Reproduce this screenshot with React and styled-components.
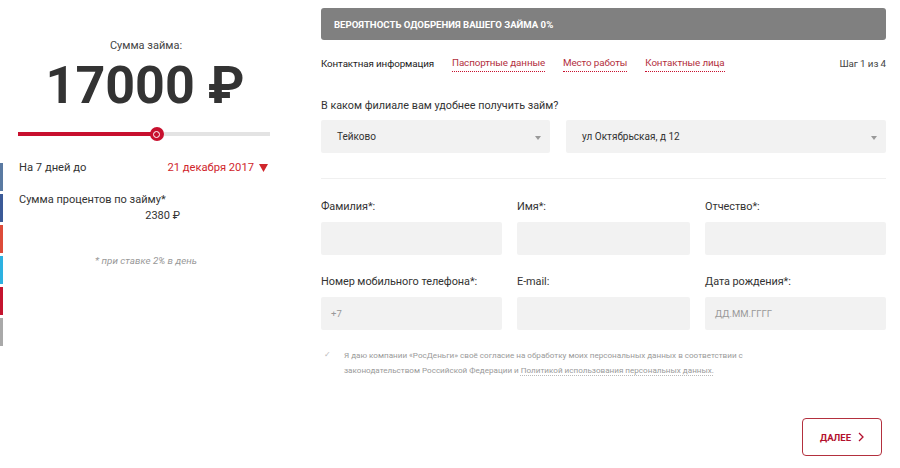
import React from "react";
import styled, { createGlobalStyle } from "styled-components";

const GlobalStyle = createGlobalStyle`
  body {
    margin: 0;
    background: #fff;
    font-family: Roboto, "Liberation Sans", sans-serif;
    color: #333;
  }
`;

const Page = styled.div`
  position: relative;
  display: flex;
  align-items: flex-start;
  gap: 51px;
  padding: 8px 0 0 18px;
  width: 900px;
  height: 468px;
  box-sizing: border-box;
  overflow: hidden;
`;

const Social = styled.div`
  position: absolute;
  left: 0;
  top: 163px;
  display: flex;
  flex-direction: column;
  gap: 3px;
`;

const SocialBtn = styled.div`
  width: 3px;
  height: 28px;
  background: ${(p) => p.color};
`;

const Calc = styled.div`
  width: 252px;
  padding-top: 31px;
  display: flex;
  flex-direction: column;
`;

const SumLabel = styled.div`
  text-align: center;
  font-size: 11px;
  color: #444;
  padding-left: 4px;
`;

const SumValue = styled.div`
  text-align: center;
  font-size: 52px;
  font-weight: 700;
  color: #333;
  line-height: 60px;
  margin-top: 4px;
  padding-left: 2px;
`;

const Slider = styled.div`
  position: relative;
  height: 4px;
  margin-top: 16px;
  background: #e3e3e3;
`;

const SliderFill = styled.div`
  height: 100%;
  background: #c8102e;
`;

const Thumb = styled.div`
  position: absolute;
  top: 50%;
  width: 14px;
  height: 14px;
  margin: -7px 0 0 -7px;
  border-radius: 50%;
  background: #c8102e;
  display: flex;
  align-items: center;
  justify-content: center;
  &::after {
    content: "";
    width: 7px;
    height: 7px;
    border-radius: 50%;
    border: 1.5px solid #fff;
    box-sizing: border-box;
    background: #c8102e;
  }
`;

const TermRow = styled.div`
  display: flex;
  justify-content: space-between;
  align-items: center;
  margin-top: 25px;
  padding-left: 1px;
  font-size: 11.2px;
`;

const DateSelect = styled.span`
  color: #d0262c;
  display: flex;
  align-items: center;
  gap: 5px;
  padding-right: 2px;
`;

const Interest = styled.div`
  margin-top: 18px;
  padding-left: 1px;
  font-size: 11px;
  line-height: 16px;
`;

const InterestValue = styled.div`
  width: 161px;
  text-align: right;
`;

const Note = styled.div`
  margin-top: 31px;
  text-align: center;
  font-size: 9.8px;
  font-style: italic;
  color: #999;
  padding-left: 4px;
`;

const Form = styled.div`
  width: 565px;
  display: flex;
  flex-direction: column;
`;

const Banner = styled.div`
  height: 32px;
  background: #808080;
  border-radius: 3px;
  display: flex;
  align-items: center;
  padding-left: 13px;
  color: #fff;
  font-size: 9.6px;
  font-weight: 700;
  text-transform: uppercase;
`;

const Steps = styled.div`
  display: flex;
  align-items: center;
  gap: 18px;
  margin-top: 16px;
  font-size: 9.8px;
  letter-spacing: -0.1px;
  line-height: 14px;
`;

const Step = styled.span`
  color: ${(p) => (p.active ? "#222" : "#b3303e")};
  border-bottom: ${(p) => (p.active ? "none" : "1px dotted #c8102e")};
  padding-bottom: 1px;
`;

const StepCount = styled.span`
  margin-left: auto;
  color: #444;
`;

const Question = styled.div`
  margin-top: 27px;
  font-size: 10.8px;
`;

const SelectRow = styled.div`
  display: flex;
  gap: 16px;
  margin-top: 8px;
`;

const Select = styled.div`
  width: ${(p) => p.w}px;
  height: 33px;
  background: #f2f2f2;
  border-radius: 2px;
  display: flex;
  align-items: center;
  justify-content: space-between;
  padding: 0 9px 0 16px;
  box-sizing: border-box;
  font-size: 10px;
  color: #333;
  &::after {
    content: "";
    border-left: 3.5px solid transparent;
    border-right: 3.5px solid transparent;
    border-top: 4px solid #999;
    margin-top: 3px;
  }
`;

const Divider = styled.hr`
  border: none;
  height: 1px;
  background: #f0f0f0;
  margin: 25px 0 0;
`;

const Fields = styled.div`
  display: grid;
  grid-template-columns: 181px 173px 181px;
  column-gap: 15px;
  row-gap: 20px;
  margin-top: 21px;
`;

const Field = styled.div`
  display: flex;
  flex-direction: column;
  gap: 8px;
`;

const Label = styled.div`
  font-size: 10.9px;
  letter-spacing: -0.05px;
  line-height: 14px;
  color: #333;
`;

const Input = styled.div`
  height: 33px;
  background: #f2f2f2;
  border-radius: 2px;
  display: flex;
  align-items: center;
  padding-left: 10px;
  font-size: 9.5px;
  color: #999;
`;

const Consent = styled.div`
  display: flex;
  gap: 12px;
  margin-top: 18px;
  padding-left: 1px;
`;

const Check = styled.div`
  width: 10px;
  height: 10px;
  margin-top: 2px;
  flex-shrink: 0;
  color: #bbb;
  font-size: 8px;
  line-height: 10px;
  text-align: center;
`;

const ConsentText = styled.div`
  font-size: 8.1px;
  line-height: 15px;
  color: #9a9a9a;
  width: 420px;
`;

const DotLink = styled.span`
  text-decoration: underline dotted #bbb;
  text-underline-offset: 2px;
`;

const Actions = styled.div`
  display: flex;
  justify-content: flex-end;
  margin-top: 40px;
  padding-right: 4px;
`;

const NextButton = styled.div`
  width: 80px;
  height: 38px;
  box-sizing: border-box;
  border: 1px solid #b3303e;
  border-radius: 4px;
  display: flex;
  align-items: center;
  justify-content: center;
  gap: 7px;
  color: #b3102e;
  font-size: 9.5px;
  font-weight: 700;
`;

const socials = ["#5a7aa2", "#3b5a97", "#dd4b39", "#2cb1e1", "#c4142f", "#a9a9a9"];

const App = () => {
  return (
    <>
      <GlobalStyle />
      <Page>
        <Social>
          {socials.map((c) => (
            <SocialBtn key={c} color={c} />
          ))}
        </Social>
        <Calc>
          <SumLabel>Сумма займа:</SumLabel>
          <SumValue>17000 ₽</SumValue>
          <Slider>
            <SliderFill style={{ width: "55%" }} />
            <Thumb style={{ left: "55%" }} />
          </Slider>
          <TermRow>
            <span>На 7 дней до</span>
            <DateSelect>
              21 декабря 2017
              <svg width="9" height="8" viewBox="0 0 9 8">
                <path d="M0 0h9L4.5 8z" fill="#d0262c" />
              </svg>
            </DateSelect>
          </TermRow>
          <Interest>
            Сумма процентов по займу*
            <InterestValue>2380 ₽</InterestValue>
          </Interest>
          <Note>* при ставке 2% в день</Note>
        </Calc>
        <Form>
          <Banner>Вероятность одобрения вашего займа 0%</Banner>
          <Steps>
            <Step active>Контактная информация</Step>
            <Step>Паспортные данные</Step>
            <Step>Место работы</Step>
            <Step>Контактные лица</Step>
            <StepCount>Шаг 1 из 4</StepCount>
          </Steps>
          <Question>В каком филиале вам удобнее получить займ?</Question>
          <SelectRow>
            <Select w={229}>Тейково</Select>
            <Select w={320}>ул Октябрьская, д 12</Select>
          </SelectRow>
          <Divider />
          <Fields>
            <Field>
              <Label>Фамилия*:</Label>
              <Input />
            </Field>
            <Field>
              <Label>Имя*:</Label>
              <Input />
            </Field>
            <Field>
              <Label>Отчество*:</Label>
              <Input />
            </Field>
            <Field>
              <Label>Номер мобильного телефона*:</Label>
              <Input>+7</Input>
            </Field>
            <Field>
              <Label>E-mail:</Label>
              <Input />
            </Field>
            <Field>
              <Label>Дата рождения*:</Label>
              <Input>ДД.ММ.ГГГГ</Input>
            </Field>
          </Fields>
          <Consent>
            <Check>✓</Check>
            <ConsentText>
              Я даю компании «РосДеньги» своё согласие на обработку моих персональных данных в
              соответствии с законодательством Российской Федерации и{" "}
              <DotLink>Политикой использования персональных данных.</DotLink>
            </ConsentText>
          </Consent>
          <Actions>
            <NextButton>
              ДАЛЕЕ
              <svg width="6" height="10" viewBox="0 0 6 10">
                <path d="M1 1l4 4-4 4" fill="none" stroke="#b3102e" strokeWidth="1.3" />
              </svg>
            </NextButton>
          </Actions>
        </Form>
      </Page>
    </>
  );
};

export default App;
